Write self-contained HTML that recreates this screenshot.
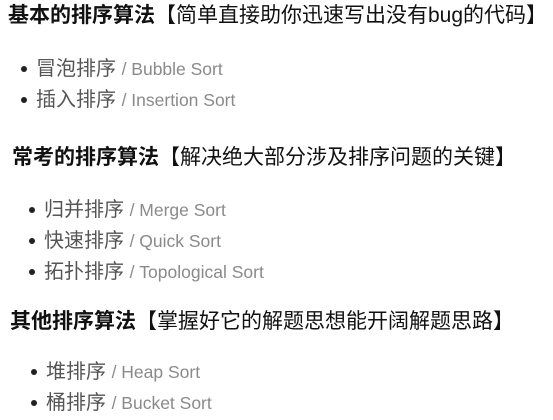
<!DOCTYPE html>
<html><head><meta charset="utf-8"><style>
body{margin:0;width:553px;height:420px;background:#fff;font-family:"Liberation Sans","Noto Sans CJK SC",sans-serif;position:relative;overflow:hidden}
.h{position:absolute;font-size:21px;color:#111;white-space:nowrap;line-height:24px}
.h b{font-weight:bold}
.i{position:absolute;font-size:20px;color:#555;white-space:nowrap;line-height:24px}
.i::before{content:"";position:absolute;left:-15px;top:9px;width:6px;height:6px;border-radius:50%;background:#222}
.i span{font-size:17.5px;color:#8a8a8a}
</style></head><body>
<div class="h" style="left:8px;top:4px"><b>基本的排序算法</b>【简单直接助你迅速写出没有bug的代码】</div>
<div class="i" style="left:36px;top:57px">冒泡排序 <span>/ Bubble Sort</span></div>
<div class="i" style="left:36px;top:88px">插入排序 <span>/ Insertion Sort</span></div>
<div class="h" style="left:12px;top:146px"><b>常考的排序算法</b>【解决绝大部分涉及排序问题的关键】</div>
<div class="i" style="left:44px;top:198px">归并排序 <span>/ Merge Sort</span></div>
<div class="i" style="left:44px;top:229px">快速排序 <span>/ Quick Sort</span></div>
<div class="i" style="left:44px;top:260px">拓扑排序 <span>/ Topological Sort</span></div>
<div class="h" style="left:10px;top:310px"><b>其他排序算法</b>【掌握好它的解题思想能开阔解题思路】</div>
<div class="i" style="left:46px;top:360px">堆排序 <span>/ Heap Sort</span></div>
<div class="i" style="left:46px;top:391px">桶排序 <span>/ Bucket Sort</span></div>
</body></html>
